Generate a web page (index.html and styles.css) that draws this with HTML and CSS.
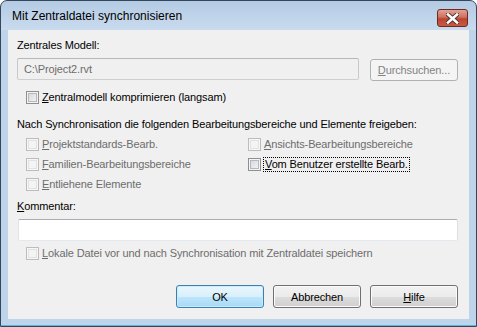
FILE: index.html
```html
<!DOCTYPE html>
<html lang="de">
<head>
  <meta charset="UTF-8" />
  <title>Mit Zentraldatei synchronisieren</title>
  <link rel="stylesheet" href="styles.css">
</head>
<body>

  <div class="window">
    <div class="titlebar">
      <span class="title">Mit Zentraldatei synchronisieren</span>
      <span class="close">
        <svg width="13" height="11" viewBox="0 0 13 11">
          <path d="M2 1.5 L11 9.5 M11 1.5 L2 9.5" stroke="#4a3330" stroke-width="4.4" stroke-linecap="square" />
          <path d="M2 1.5 L11 9.5 M11 1.5 L2 9.5" stroke="#fff" stroke-width="2.6" stroke-linecap="square" />
        </svg>
      </span>
    </div>

    <div class="client">
      <div class="label first">Zentrales Modell:</div>
      <div class="path-row">
        <div class="textbox disabled">C:\Project2.rvt</div>
        <button class="btn" disabled><u>D</u>urchsuchen...</button>
      </div>

      <label class="check compress"><span class="box"></span><span><u>Z</u>entralmodell komprimieren (langsam)</span></label>

      <div class="label release">Nach Synchronisation die folgenden Bearbeitungsbereiche und Elemente freigeben:</div>
      <div class="options">
        <label class="check disabled"><span class="box"></span><span><u>P</u>rojektstandards-Bearb.</span></label>
        <label class="check disabled"><span class="box"></span><span><u>A</u>nsichts-Bearbeitungsbereiche</span></label>
        <label class="check disabled"><span class="box"></span><span><u>F</u>amilien-Bearbeitungsbereiche</span></label>
        <label class="check"><span class="box"></span><span class="focus"><u>V</u>om Benutzer erstellte Bearb.</span></label>
        <label class="check disabled"><span class="box"></span><span><u>E</u>ntliehene Elemente</span></label>
      </div>

      <div class="label comment-label"><u>K</u>ommentar:</div>
      <div class="textbox comment"></div>

      <label class="check disabled save"><span class="box"></span><span><u>L</u>okale Datei vor und nach Synchronisation mit Zentraldatei speichern</span></label>

      <div class="buttons">
        <button class="btn default">OK</button>
        <button class="btn">Abbrechen</button>
        <button class="btn"><u>H</u>ilfe</button>
      </div>
    </div>
  </div>

</body>
</html>
```

FILE: styles.css
```css
body {
  margin: 0;
  background: #ffffff;
  font-family: "Liberation Sans", Arial, sans-serif;
  font-size: 11px;
  letter-spacing: -0.12px;
  color: #000;
}
.window {
  width: 477px;
  height: 327px;
  box-sizing: border-box;
  border: 1px solid #35475c;
  border-radius: 7px 7px 0 0;
  background: linear-gradient(#b4cbe4 0, #c9dbee 29px, #bdd4ea 29px);
  padding: 0 7px 7px 7px;
  display: flex;
  flex-direction: column;
  box-shadow: inset 0 -1px 0 #5ab6d8;
}
.titlebar {
  height: 29px;
  display: flex;
  justify-content: space-between;
  align-items: flex-start;
}
.title {
  font-size: 12px;
  letter-spacing: 0;
  margin: 8px 0 0 4px;
  color: #000;
}
.close {
  width: 29px;
  height: 16px;
  margin: 8px 1px 0 0;
  border: 1px solid #6b2b23;
  border-radius: 3px;
  background: linear-gradient(#e2a194 0, #d0715f 45%, #bc4430 55%, #c95a42 100%);
  display: flex;
  justify-content: center;
  align-items: center;
}
.client {
  flex: 1;
  background: #f0f0f0;
  padding: 0 11px 0 9px;
  display: flex;
  flex-direction: column;
}
.label {
  line-height: 13px;
}
.label.first {
  margin-top: 9px;
}
.path-row {
  display: flex;
  gap: 11px;
  margin-top: 6px;
}
.textbox {
  height: 22px;
  box-sizing: border-box;
  border: 1px solid #abadb3;
  border-color: #abadb3 #dbdfe6 #e3e9ef #e2e3ea;
  border-radius: 2px;
  background: #fff;
  padding: 0 6px;
  line-height: 20px;
}
.textbox.disabled {
  flex: 1;
  background: #f0f0f0;
  border-color: #b7b7b7 #c9c9c9 #cfcfcf #c9c9c9;
  color: #6d6d6d;
}
.btn {
  width: 88px;
  height: 23px;
  font-family: inherit;
  font-size: 11px;
  letter-spacing: inherit;
  color: #000;
  border: 1px solid #707070;
  border-radius: 3px;
  background: linear-gradient(#f2f2f2 0, #ebebeb 50%, #dddddd 50%, #cfcfcf 100%);
  box-shadow: inset 0 0 0 1px #fbfbfb;
  padding: 0;
}
.btn:disabled {
  margin-top: 1px;
  height: 22px;
  border-color: #adb2b5;
  background: #f4f4f4;
  color: #838383;
  box-shadow: none;
}
.btn.default {
  border-color: #3c7fb1;
  background: linear-gradient(#eaf6fd 0, #d9f0fc 50%, #bee6fd 50%, #a7d9f5 100%);
  box-shadow: inset 0 0 0 1px #c8ecfc;
}
.check {
  display: flex;
  align-items: center;
  gap: 3px;
  line-height: 13px;
  height: 13px;
  padding-left: 9px;
}
.box {
  width: 13px;
  height: 13px;
  box-sizing: border-box;
  border: 1px solid #8e8f8f;
  background: linear-gradient(135deg, #d0d3d8, #f8f8f8);
  box-shadow: inset 0 0 0 1px #f4f4f4, inset 0 0 0 2px #b5b9bf;
}
.check.disabled {
  color: #6d6d6d;
}
.check.disabled .box {
  border-color: #bcbcbc;
  background: #f4f4f4;
  box-shadow: inset 0 0 0 1px #f7f7f7, inset 0 0 0 2px #e2e2e2;
}
.focus {
  outline: 1px dotted #000;
  padding: 0 1px;
}
.compress {
  margin-top: 10px;
}
.release {
  margin-top: 14px;
}
.options {
  display: grid;
  grid-template-columns: 222px 1fr;
  grid-auto-rows: 13px;
  row-gap: 7px;
  margin-top: 7px;
}
.comment-label {
  margin-top: 9px;
}
.textbox.comment {
  margin: 6px 0 0 1px;
}
.save {
  margin-top: 6px;
}
.buttons {
  display: flex;
  justify-content: flex-end;
  gap: 9px;
  margin-top: auto;
  margin-bottom: 11px;
}
u {
  text-decoration: underline;
}
```
